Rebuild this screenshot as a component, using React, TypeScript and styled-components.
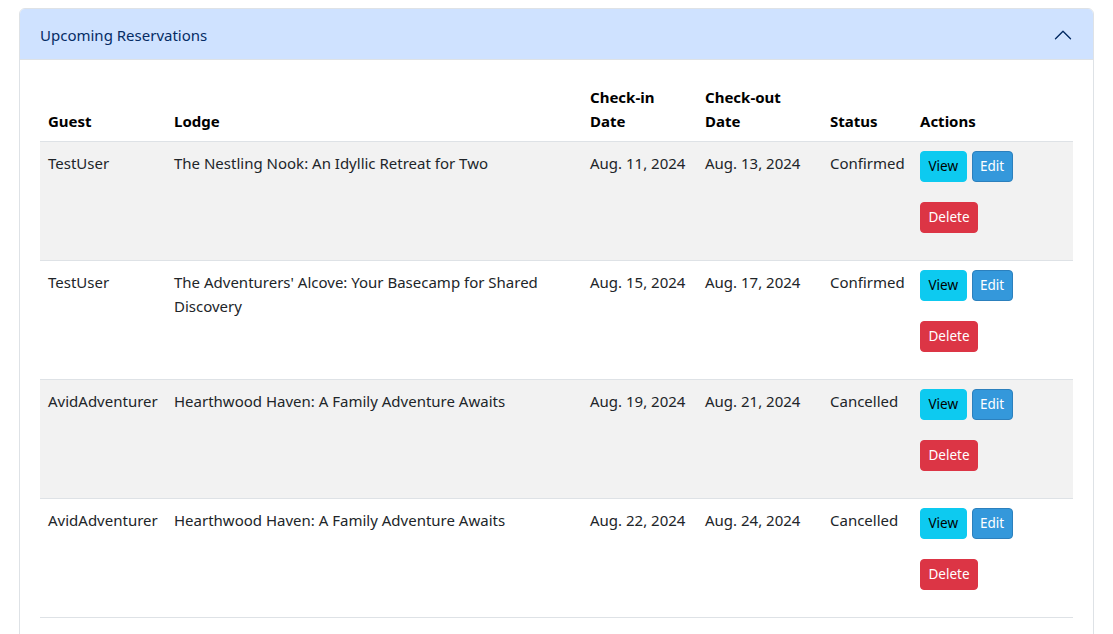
import styled, { createGlobalStyle } from "styled-components";

const GlobalStyle = createGlobalStyle`
  body {
    margin: 0;
    background: #ffffff;
    font-family: "Noto Sans", "Open Sans", sans-serif;
    font-size: 16px;
    line-height: 24px;
    color: #212529;
  }
`;

const Page = styled.div`
  padding: 8px 19px 0;
`;

const Card = styled.div`
  border: 1px solid #dee2e6;
  border-radius: 6px;
  overflow: hidden;
  background: #ffffff;
`;

const Header = styled.button`
  width: 100%;
  display: flex;
  align-items: center;
  justify-content: space-between;
  padding: 16px 20px 16px 20px;
  height: 51px;
  border: none;
  background: #cfe2ff;
  color: #052c65;
  font-family: inherit;
  font-size: 15px;
  line-height: 20px;
  text-align: left;
  box-shadow: inset 0 -1px 0 #dee2e6;
  cursor: pointer;
`;

const Chevron = styled.svg`
  width: 20px;
  height: 20px;
  flex-shrink: 0;
`;

const Body = styled.div`
  padding: 17px 20px 32px;
`;

const Table = styled.table`
  width: 100%;
  table-layout: fixed;
  border-collapse: collapse;
  font-size: 15px;
`;

const Th = styled.th`
  text-align: left;
  vertical-align: bottom;
  padding: 8px;
  font-weight: 700;
  color: #000;
  border-bottom: 1px solid #dee2e6;
`;

const Row = styled.tr<{ $striped: boolean }>`
  background: ${(p) => (p.$striped ? "#f2f2f2" : "#ffffff")};
  border-bottom: 1px solid #dee2e6;
`;

const Td = styled.td`
  vertical-align: top;
  padding: 9px 8px 7px;
  color: #212529;
`;

const ActionGroup = styled.div`
  display: flex;
  gap: 5px;
  margin-bottom: 20px;
`;

const Btn = styled.button<{ $kind: "info" | "primary" | "danger" }>`
  height: 31px;
  padding: 0 7.5px;
  font-family: inherit;
  font-size: 13.5px;
  line-height: 21px;
  border-radius: 4px;
  cursor: pointer;
  border: 1px solid
    ${(p) =>
      p.$kind === "info" ? "#0dcaf0" : p.$kind === "primary" ? "#2c80bd" : "#dc3545"};
  background: ${(p) =>
    p.$kind === "info" ? "#0dcaf0" : p.$kind === "primary" ? "#3498db" : "#dc3545"};
  color: ${(p) => (p.$kind === "info" ? "#000" : "#fff")};
`;

const reservations = [
  {
    guest: "TestUser",
    lodge: "The Nestling Nook: An Idyllic Retreat for Two",
    checkIn: "Aug. 11, 2024",
    checkOut: "Aug. 13, 2024",
    status: "Confirmed",
  },
  {
    guest: "TestUser",
    lodge: "The Adventurers' Alcove: Your Basecamp for Shared Discovery",
    checkIn: "Aug. 15, 2024",
    checkOut: "Aug. 17, 2024",
    status: "Confirmed",
  },
  {
    guest: "AvidAdventurer",
    lodge: "Hearthwood Haven: A Family Adventure Awaits",
    checkIn: "Aug. 19, 2024",
    checkOut: "Aug. 21, 2024",
    status: "Cancelled",
  },
  {
    guest: "AvidAdventurer",
    lodge: "Hearthwood Haven: A Family Adventure Awaits",
    checkIn: "Aug. 22, 2024",
    checkOut: "Aug. 24, 2024",
    status: "Cancelled",
  },
];

export default function App() {
  return (
    <Page>
      <GlobalStyle />
      <Card>
        <Header>
          <span>Upcoming Reservations</span>
          <Chevron viewBox="0 0 16 16">
            <path
              d="M2 11L8 5L14 11"
              fill="none"
              stroke="#052c65"
              strokeWidth="1.1"
              strokeLinecap="round"
              strokeLinejoin="round"
            />
          </Chevron>
        </Header>
        <Body>
          <Table>
            <colgroup>
              <col style={{ width: 126 }} />
              <col style={{ width: 416 }} />
              <col style={{ width: 115 }} />
              <col style={{ width: 125 }} />
              <col style={{ width: 90 }} />
              <col />
            </colgroup>
            <thead>
              <tr>
                <Th>Guest</Th>
                <Th>Lodge</Th>
                <Th>Check-in Date</Th>
                <Th>Check-out Date</Th>
                <Th>Status</Th>
                <Th>Actions</Th>
              </tr>
            </thead>
            <tbody>
              {reservations.map((r, i) => (
                <Row key={i} $striped={i % 2 === 0}>
                  <Td>{r.guest}</Td>
                  <Td>{r.lodge}</Td>
                  <Td>{r.checkIn}</Td>
                  <Td>{r.checkOut}</Td>
                  <Td>{r.status}</Td>
                  <Td>
                    <ActionGroup>
                      <Btn $kind="info">View</Btn>
                      <Btn $kind="primary">Edit</Btn>
                    </ActionGroup>
                    <ActionGroup>
                      <Btn $kind="danger">Delete</Btn>
                    </ActionGroup>
                  </Td>
                </Row>
              ))}
            </tbody>
          </Table>
        </Body>
      </Card>
    </Page>
  );
}
